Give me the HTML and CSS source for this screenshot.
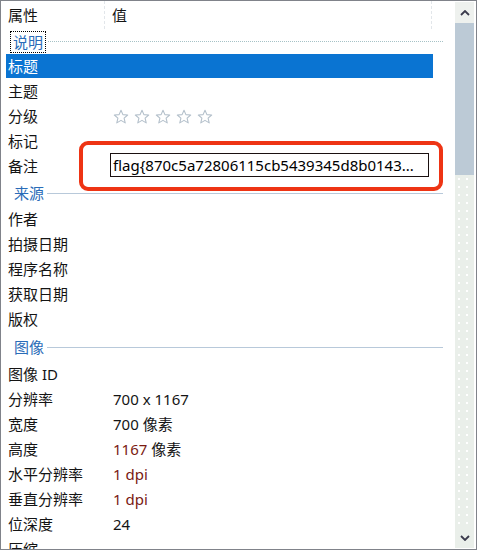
FILE: index.html
```html
<!DOCTYPE html>
<html lang="zh-CN">
<head>
<meta charset="utf-8">
<link rel="stylesheet" href="styles.css">
</head>
<body>
<div class="window">
  <div class="list">
    <div class="header">
      <span class="hcol1">属性</span>
      <span class="hcol2">值</span>
    </div>
    <div class="group g-first">
      <span class="gtitle focus">说明</span><span class="gline dotted"></span>
    </div>
    <div class="row sel"><span class="k">标题</span><span class="v"></span></div>
    <div class="row"><span class="k">主题</span><span class="v"></span></div>
    <div class="row"><span class="k">分级</span>
      <span class="v stars">
        <svg viewBox="0 0 16 16" class="star"><path d="M8 1.2l1.9 4.4 4.8.4-3.6 3.2 1.1 4.7L8 11.4l-4.2 2.5 1.1-4.7L1.3 6l4.8-.4z"/></svg>
        <svg viewBox="0 0 16 16" class="star"><path d="M8 1.2l1.9 4.4 4.8.4-3.6 3.2 1.1 4.7L8 11.4l-4.2 2.5 1.1-4.7L1.3 6l4.8-.4z"/></svg>
        <svg viewBox="0 0 16 16" class="star"><path d="M8 1.2l1.9 4.4 4.8.4-3.6 3.2 1.1 4.7L8 11.4l-4.2 2.5 1.1-4.7L1.3 6l4.8-.4z"/></svg>
        <svg viewBox="0 0 16 16" class="star"><path d="M8 1.2l1.9 4.4 4.8.4-3.6 3.2 1.1 4.7L8 11.4l-4.2 2.5 1.1-4.7L1.3 6l4.8-.4z"/></svg>
        <svg viewBox="0 0 16 16" class="star"><path d="M8 1.2l1.9 4.4 4.8.4-3.6 3.2 1.1 4.7L8 11.4l-4.2 2.5 1.1-4.7L1.3 6l4.8-.4z"/></svg>
      </span>
    </div>
    <div class="row"><span class="k">标记</span><span class="v"></span></div>
    <div class="row"><span class="k">备注</span><span class="v"><span class="textbox">flag{870c5a72806115cb5439345d8b0143...</span></span></div>
    <div class="group">
      <span class="gtitle">来源</span><span class="gline"></span>
    </div>
    <div class="row"><span class="k">作者</span><span class="v"></span></div>
    <div class="row"><span class="k">拍摄日期</span><span class="v"></span></div>
    <div class="row"><span class="k">程序名称</span><span class="v"></span></div>
    <div class="row"><span class="k">获取日期</span><span class="v"></span></div>
    <div class="row"><span class="k">版权</span><span class="v"></span></div>
    <div class="group g-tall">
      <span class="gtitle">图像</span><span class="gline"></span>
    </div>
    <div class="row"><span class="k">图像 ID</span><span class="v"></span></div>
    <div class="row"><span class="k">分辨率</span><span class="v">700 x 1167</span></div>
    <div class="row"><span class="k">宽度</span><span class="v">700 像素</span></div>
    <div class="row"><span class="k">高度</span><span class="v"><span class="warm">1167</span> 像素</span></div>
    <div class="row"><span class="k">水平分辨率</span><span class="v warm">1 dpi</span></div>
    <div class="row"><span class="k">垂直分辨率</span><span class="v warm">1 dpi</span></div>
    <div class="row"><span class="k">位深度</span><span class="v">24</span></div>
    <div class="row"><span class="k">压缩</span><span class="v"></span></div>
  </div>
  <div class="scrollbar">
    <div class="sb-btn sb-up">
      <svg viewBox="0 0 10 6" class="chev"><polyline points="1,5 5,1 9,5"/></svg>
    </div>
    <div class="sb-thumb"></div>
    <div class="sb-track"></div>
    <div class="sb-btn sb-down">
      <svg viewBox="0 0 10 6" class="chev"><polyline points="1,1 5,5 9,1"/></svg>
    </div>
  </div>
  <div class="sb-gap"></div>
  <div class="annot"></div>
</div>
</body>
</html>
```

FILE: styles.css
```css
html, body {
  margin: 0;
  padding: 0;
  background: #ffffff;
}

.window {
  position: relative;
  width: 477px;
  height: 550px;
  box-sizing: border-box;
  border: 1px solid #80838a;
  display: flex;
  overflow: hidden;
  font-family: "Noto Sans", "Noto Sans CJK SC", sans-serif;
  font-size: 15px;
  color: #141414;
}

.list {
  width: 454px;
  padding-left: 5px;
  box-sizing: border-box;
  overflow: hidden;
}

.header {
  display: flex;
  height: 28px;
  line-height: 28px;
}

.hcol1 {
  width: 99px;
  padding-left: 2px;
  box-sizing: border-box;
  border-right: 1px dashed #e2e6ea;
}

.hcol2 {
  width: 327px;
  padding-left: 7px;
  box-sizing: border-box;
  border-right: 1px dashed #e2e6ea;
}

.group {
  display: flex;
  align-items: center;
  height: 28px;
  width: 437px;
}

.g-first {
  height: 25px;
}

.g-tall {
  height: 30px;
}

.gtitle {
  margin-left: 8px;
  color: #2a6cb8;
  line-height: 18px;
}

.gtitle.focus {
  margin-left: 6px;
  padding: 0 1px;
  outline: 1px dotted #000;
  outline-offset: 1px;
  margin-right: 1px;
}

.gline {
  flex: 1;
  height: 1px;
  margin-left: 3px;
  background: #b8c9da;
}

.gline.dotted {
  background: none;
  border-top: 1px dotted #a6c2c6;
  height: 0;
  margin-left: 3px;
}

.row {
  display: grid;
  grid-template-columns: 107px 1fr;
  width: 427px;
  height: 25px;
  line-height: 25px;
  white-space: nowrap;
}

.row.sel {
  background: linear-gradient(#0a74d2 0 24px, transparent 24px);
  color: #ffffff;
}

.k {
  padding-left: 2px;
}

.v {
  overflow: visible;
}

.warm {
  color: #7a1a12;
}

.stars {
  display: flex;
  align-items: center;
  gap: 5px;
  padding-left: 0;
}

.star {
  width: 16px;
  height: 16px;
  fill: none;
  stroke: #b4c0cb;
  stroke-width: 1.1;
  stroke-linejoin: round;
}

.textbox {
  display: block;
  margin-left: -3px;
  margin-top: -1px;
  width: 319px;
  height: 24px;
  box-sizing: border-box;
  border: 1px solid #1a1010;
  padding-left: 2px;
  line-height: 22px;
  overflow: hidden;
  white-space: nowrap;
  color: #000;
  background: #fff;
}

.scrollbar {
  width: 19px;
  margin-top: 1px;
  margin-bottom: 1px;
  display: flex;
  flex-direction: column;
}

.sb-btn {
  display: flex;
  align-items: center;
  justify-content: center;
  background: #eaefea;
}

.sb-up {
  height: 21px;
  background: #eef1ee;
}

.sb-down {
  height: 20px;
}

.sb-thumb {
  height: 152px;
  background: #bccad6;
}

.sb-track {
  flex: 1;
  background-color: #eaefea;
  background-image: radial-gradient(circle, #ffffff 0.7px, transparent 1.1px);
  background-size: 8px 8px;
}

.chev {
  width: 10px;
  height: 6px;
  fill: none;
  stroke: #3a3a4c;
  stroke-width: 1.8;
}

.sb-gap {
  width: 2px;
}

.annot {
  position: absolute;
  left: 78px;
  top: 140px;
  width: 364px;
  height: 50px;
  box-sizing: border-box;
  border: 4px solid #ee3414;
  border-radius: 9px;
}
```
